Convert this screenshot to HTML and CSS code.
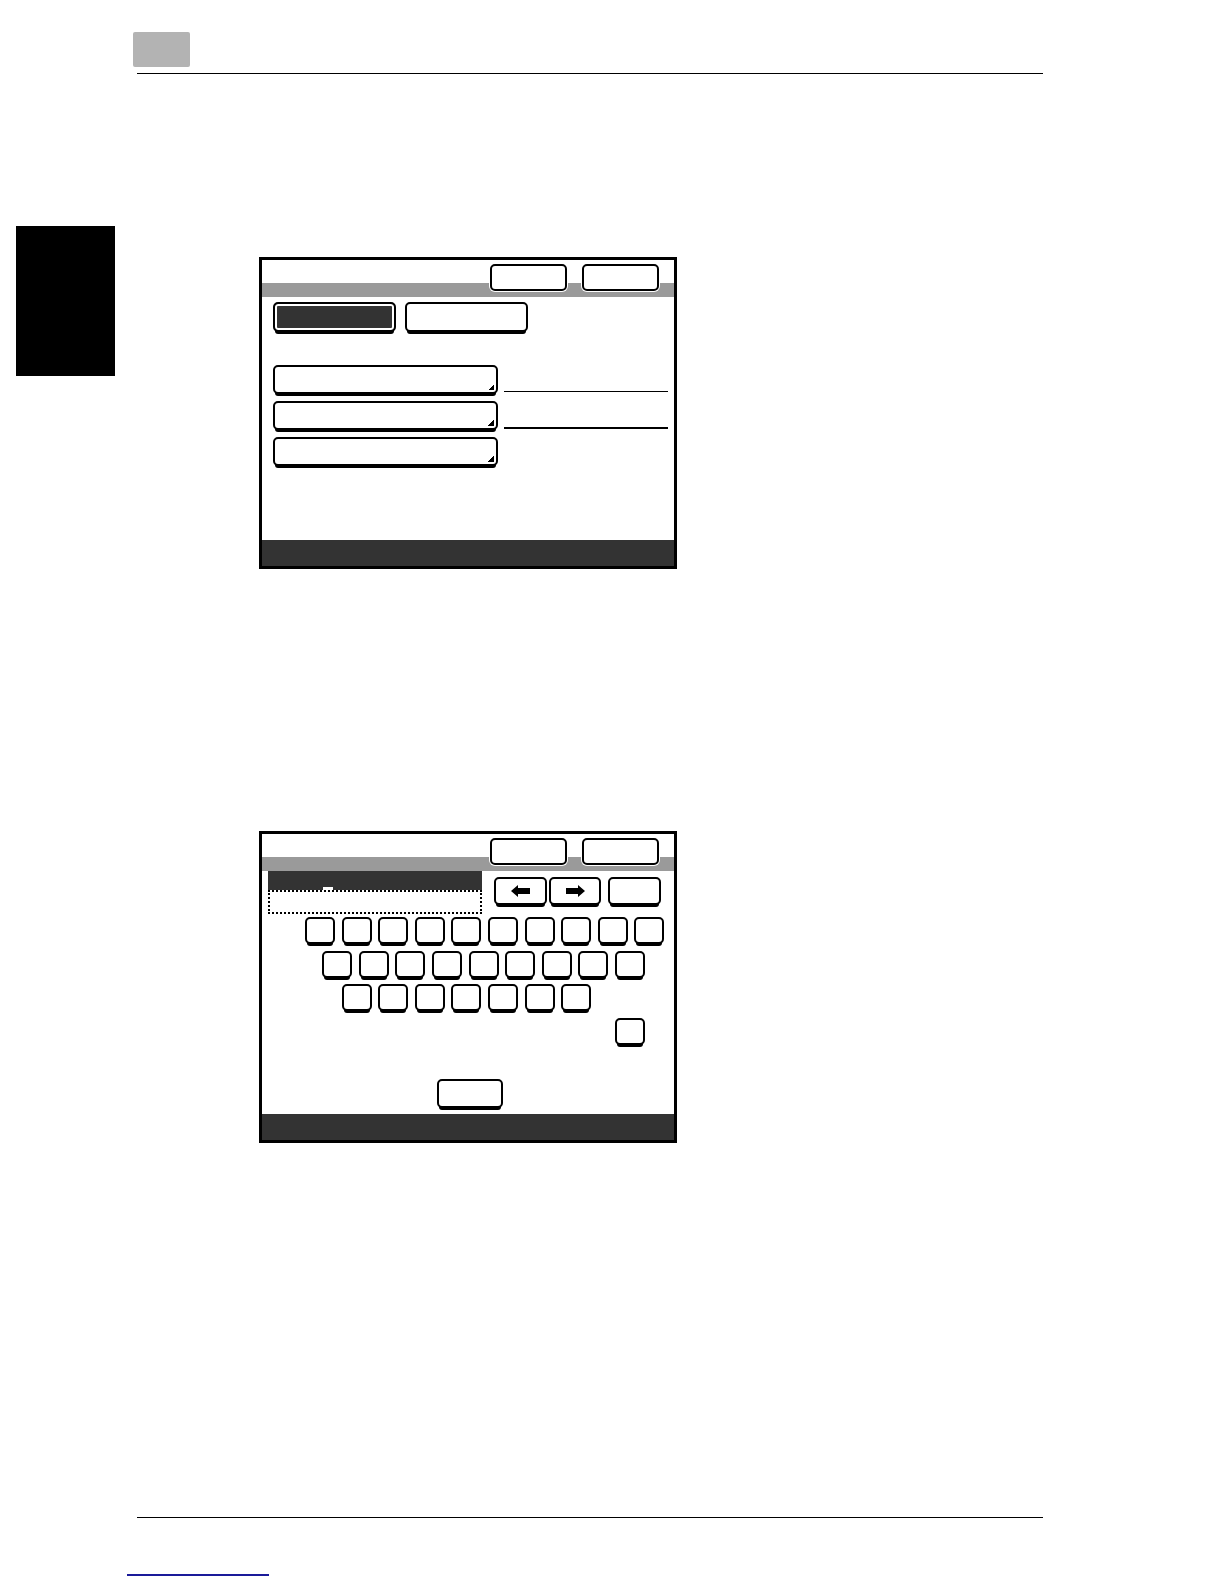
FILE: index.html
```html
<!DOCTYPE html>
<html lang="en">
<head>
<meta charset="utf-8">
<title>Manual page</title>
<link rel="stylesheet" href="styles.css">
</head>
<body>
<header class="page-head">
  <div class="chapter-tab"></div>
  <div class="head-rule"></div>
</header>

<div class="page-main">
  <aside class="side-col"><div class="side-tab"></div></aside>

  <main class="content">
    <section class="screen">
      <div class="screen-title">
        <div class="title-btn"></div>
        <div class="title-btn"></div>
      </div>
      <div class="menu-body">
        <div class="tabs">
          <div class="tab tab-on"></div>
          <div class="tab"></div>
        </div>
        <div class="menu-rows">
          <div class="row-list">
            <div class="row-btn"></div>
            <div class="row-btn"></div>
            <div class="row-btn"></div>
          </div>
          <div class="row-lines">
            <div class="line-thin"></div>
            <div class="line-thick"></div>
          </div>
        </div>
      </div>
      <div class="screen-foot"></div>
    </section>

    <section class="screen">
      <div class="screen-title">
        <div class="title-btn"></div>
        <div class="title-btn"></div>
      </div>
      <div class="keys-body">
        <div class="entry-row">
          <div class="entry">
            <div class="entry-bar"><span class="cursor"></span></div>
            <div class="entry-field"></div>
          </div>
          <div class="nav-btns">
            <div class="btn nav-btn nav-left">
              <svg width="19" height="12" viewBox="0 0 19 12"><polygon points="0,6 7,0 7,3 19,3 19,9 7,9 7,12" fill="#000"/></svg>
            </div>
            <div class="btn nav-btn nav-right">
              <svg width="19" height="12" viewBox="0 0 19 12"><polygon points="19,6 12,0 12,3 0,3 0,9 12,9 12,12" fill="#000"/></svg>
            </div>
            <div class="btn nav-btn nav-extra"></div>
          </div>
        </div>
        <div class="kb">
          <div class="kb-row kb-row1">
            <div class="btn key"></div><div class="btn key"></div><div class="btn key"></div><div class="btn key"></div><div class="btn key"></div>
            <div class="btn key"></div><div class="btn key"></div><div class="btn key"></div><div class="btn key"></div><div class="btn key"></div>
          </div>
          <div class="kb-row kb-row2">
            <div class="btn key"></div><div class="btn key"></div><div class="btn key"></div><div class="btn key"></div><div class="btn key"></div>
            <div class="btn key"></div><div class="btn key"></div><div class="btn key"></div><div class="btn key"></div>
          </div>
          <div class="kb-row kb-row3">
            <div class="btn key"></div><div class="btn key"></div><div class="btn key"></div><div class="btn key"></div>
            <div class="btn key"></div><div class="btn key"></div><div class="btn key"></div>
          </div>
          <div class="kb-row kb-row4">
            <div class="btn key"></div>
          </div>
        </div>
        <div class="btn ok-btn"></div>
      </div>
      <div class="screen-foot"></div>
    </section>
  </main>
</div>

<footer class="page-foot">
  <div class="foot-rule"></div>
  <a class="foot-link"></a>
</footer>
</body>
</html>
```

FILE: styles.css
```css
html, body {
  margin: 0;
  padding: 0;
  background: #fff;
}
body {
  width: 1224px;
  min-height: 1584px;
  font-family: "Liberation Sans", Arial, sans-serif;
}

/* page header */
.page-head {
  padding-top: 32px;
}
.chapter-tab {
  margin-left: 133px;
  width: 57px;
  height: 35px;
  background: #b3b3b3;
  border-radius: 2px;
}
.head-rule {
  margin: 6px 0 0 137px;
  width: 906px;
  height: 1px;
  background: #000;
}

/* main area */
.page-main {
  display: flex;
}
.side-col {
  flex: none;
  width: 115px;
}
.side-tab {
  margin: 152px 0 0 16px;
  width: 99px;
  height: 150px;
  background: #000;
}
.content {
  margin-left: 144px;
  padding-top: 183px;
  display: flex;
  flex-direction: column;
  gap: 262px;
}

/* screen frame */
.screen {
  box-sizing: border-box;
  width: 418px;
  height: 312px;
  border: 3px solid #000;
  background: #fff;
  display: flex;
  flex-direction: column;
}
.screen-title {
  box-sizing: border-box;
  height: 37px;
  padding: 4px 15px 0 0;
  display: flex;
  justify-content: flex-end;
  gap: 15px;
  background: linear-gradient(#fff 23px, #9a9a9a 23px);
}
.title-btn {
  box-sizing: border-box;
  width: 77px;
  height: 27px;
  border: 2px solid #000;
  border-radius: 5px;
  background: #fff;
  box-shadow: 0 0 0 1px #fff;
}
.screen-foot {
  margin-top: auto;
  height: 26px;
  background: #333;
}

/* generic button */
.btn {
  box-sizing: border-box;
  border: 2px solid #000;
  border-radius: 5px;
  background: #fff;
  box-shadow: 0 4px 0 -2px #000;
}

/* screen 1 : menu */
.menu-body {
  padding: 5px 6px 0 11px;
}
.tabs {
  display: flex;
  gap: 9px;
}
.tab {
  box-sizing: border-box;
  width: 123px;
  height: 30px;
  border: 2px solid #000;
  border-radius: 5px;
  background: #fff;
  box-shadow: 0 4px 0 -2px #000;
}
.tab-on {
  background: #333;
  box-shadow: inset 0 0 0 2px #fff, 0 4px 0 -2px #000;
}
.menu-rows {
  margin-top: 33px;
  display: flex;
  gap: 6px;
}
.row-list {
  display: flex;
  flex-direction: column;
  gap: 7px;
}
.row-btn {
  box-sizing: border-box;
  width: 225px;
  height: 29px;
  border: 2px solid #000;
  border-radius: 5px;
  background: #fff linear-gradient(to bottom right, transparent 50%, #000 50%) no-repeat right 2px bottom 2px / 6px 6px;
  box-shadow: 0 4px 0 -2px #000;
}
.row-lines {
  flex: 1;
  padding-top: 26px;
}
.line-thin {
  height: 1px;
  background: #000;
}
.line-thick {
  margin-top: 35px;
  height: 2px;
  background: #000;
}

/* screen 2 : keyboard */
.keys-body {
  display: flex;
  flex-direction: column;
}
.entry-row {
  display: flex;
  gap: 12px;
  margin-left: 6px;
}
.entry {
  width: 214px;
}
.entry-bar {
  height: 19px;
  background: #333;
  display: flex;
  align-items: flex-end;
}
.cursor {
  margin-left: 55px;
  width: 10px;
  height: 3px;
  background: #fff;
}
.entry-field {
  box-sizing: border-box;
  height: 24px;
  border: 2px dotted #000;
}
.nav-btns {
  display: flex;
  margin-top: 6px;
  gap: 2px;
}
.nav-btn {
  height: 28px;
  width: 53px;
  display: flex;
  align-items: center;
  justify-content: center;
}
.nav-right {
  width: 52px;
}
.nav-extra {
  margin-left: 5px;
}
.kb {
  margin-top: 3px;
  display: flex;
  flex-direction: column;
  gap: 6.5px;
}
.kb-row {
  display: flex;
  gap: 6.6px;
}
.kb-row1 { margin-left: 43px; }
.kb-row2 { margin-left: 60.3px; }
.kb-row3 { margin-left: 79.7px; }
.kb-row4 { margin-left: 353px; }
.key {
  width: 30px;
  height: 27px;
}
.ok-btn {
  margin: 34.5px 0 0 175px;
  width: 66px;
  height: 29px;
}

/* page footer */
.page-foot {
  margin-top: 374px;
}
.foot-rule {
  margin-left: 137px;
  width: 906px;
  height: 1px;
  background: #000;
}
.foot-link {
  display: block;
  margin: 56px 0 0 127px;
  width: 142px;
  height: 2px;
  background: #1a1a99;
}
```
